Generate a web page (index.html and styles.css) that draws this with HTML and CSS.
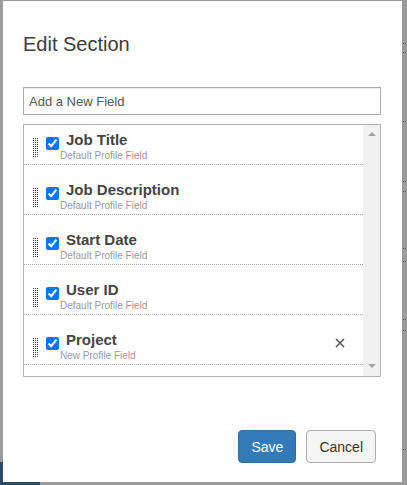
FILE: index.html
```html
<!DOCTYPE html>
<html>
<head>
<meta charset="utf-8">
<link rel="stylesheet" href="styles.css">
</head>
<body>
<div class="backdrop">
  <div class="bg-block"></div>
  <div class="bg-dots d1"></div>
  <div class="bg-dots d2"></div>
  <div class="bg-dots d3"></div>
  <div class="bg-dots d4"></div>
  <div class="bg-dots d5"></div>
  <div class="bg-dots d6"></div>
  <div class="bg-dots d7"></div>
  <div class="bg-dots d8"></div>
  <div class="bg-dots d9"></div>
  <div class="bg-dots d10"></div>
</div>
<div class="modal">
  <h4 class="modal-title">Edit Section</h4>
  <input class="field-input" type="text" placeholder="Add a New Field">
  <div class="field-list">
    <div class="rows">
      <div class="row row-first">
        <span class="handle"></span>
        <div class="content">
          <div class="line1"><input type="checkbox" class="cb" checked><span class="name">Job Title</span></div>
          <div class="sub">Default Profile Field</div>
        </div>
      </div>
      <div class="row">
        <span class="handle"></span>
        <div class="content">
          <div class="line1"><input type="checkbox" class="cb" checked><span class="name">Job Description</span></div>
          <div class="sub">Default Profile Field</div>
        </div>
      </div>
      <div class="row">
        <span class="handle"></span>
        <div class="content">
          <div class="line1"><input type="checkbox" class="cb" checked><span class="name">Start Date</span></div>
          <div class="sub">Default Profile Field</div>
        </div>
      </div>
      <div class="row">
        <span class="handle"></span>
        <div class="content">
          <div class="line1"><input type="checkbox" class="cb" checked><span class="name">User ID</span></div>
          <div class="sub">Default Profile Field</div>
        </div>
      </div>
      <div class="row">
        <span class="handle"></span>
        <div class="content">
          <div class="line1"><input type="checkbox" class="cb" checked><span class="name">Project</span></div>
          <div class="sub">New Profile Field</div>
        </div>
        <span class="remove"><svg width="10" height="10" viewBox="0 0 10 10"><path d="M1 1 L9 9 M9 1 L1 9" stroke="#555" stroke-width="1.5" fill="none"/></svg></span>
      </div>
    </div>
    <div class="scrollbar">
      <span class="arrow-up"></span>
      <span class="arrow-down"></span>
    </div>
  </div>
  <div class="footer">
    <button class="btn btn-primary">Save</button>
    <button class="btn btn-default">Cancel</button>
  </div>
</div>
</body>
</html>
```
FILE: styles.css
```css
html, body {
  margin: 0;
  padding: 0;
}
body {
  width: 407px;
  height: 485px;
  overflow: hidden;
  background: #9b9b9b;
  font-family: "Liberation Sans", Arial, sans-serif;
  position: relative;
}
.backdrop {
  position: absolute;
  left: 0;
  top: 0;
  width: 407px;
  height: 485px;
}
.bg-block {
  position: absolute;
  left: 0;
  top: 462px;
  width: 40px;
  height: 23px;
  background: #2c4a6b;
}
.bg-dots {
  position: absolute;
  left: 403px;
  width: 4px;
  height: 1px;
  background-image: linear-gradient(to right, #555 50%, transparent 50%);
  background-size: 2px 1px;
}
.d1 { top: 43px; }
.d2 { top: 52px; }
.d3 { top: 121px; }
.d4 { top: 181px; }
.d5 { top: 191px; }
.d6 { top: 248px; }
.d7 { top: 261px; }
.d8 { top: 319px; }
.d9 { top: 330px; }
.d10 { top: 449px; }

.modal {
  position: relative;
  margin: 1px 0 0 3px;
  width: 399px;
  height: 481px;
  box-sizing: border-box;
  background: #fff;
  padding: 31px 21px 0 20px;
}
.modal-title {
  margin: 0;
  font-size: 20px;
  line-height: 24px;
  font-weight: normal;
  color: #3c3c3c;
}
.field-input {
  display: block;
  margin: 31px 0 0 0;
  width: 358px;
  height: 28px;
  box-sizing: border-box;
  border: 1px solid #aaa;
  box-shadow: inset 0 1px 1px rgba(0,0,0,0.075);
  padding: 0 5px;
  font-family: "Liberation Sans", Arial, sans-serif;
  font-size: 13px;
  color: #555;
  outline: none;
}
.field-input::placeholder {
  color: #555;
}
.field-list {
  margin-top: 9px;
  width: 358px;
  height: 253px;
  box-sizing: border-box;
  border: 1px solid #b3b3b3;
  display: flex;
  overflow: hidden;
}
.rows {
  flex: 1;
  display: flex;
  flex-direction: column;
}
.row {
  height: 50px;
  box-sizing: border-box;
  padding-top: 16px;
  border-bottom: 1px dotted #a6a6a6;
  display: flex;
  align-items: flex-start;
  flex-shrink: 0;
}
.row-first {
  height: 40px;
  padding-top: 6px;
}
.handle {
  width: 5px;
  height: 20px;
  margin: 7px 0 0 9px;
  background-image:
    linear-gradient(to right, transparent 50%, #fff 50%),
    linear-gradient(#333 50%, transparent 50%);
  background-size: 2px 2px;
  flex-shrink: 0;
}
.content {
  margin-left: 8px;
  display: flex;
  flex-direction: column;
}
.line1 {
  height: 19px;
  display: flex;
  align-items: flex-start;
}
.cb {
  width: 13px;
  height: 13px;
  margin: 6px 0 0 0;
  flex-shrink: 0;
}
.name {
  margin-left: 7px;
  font-size: 15px;
  line-height: 18px;
  font-weight: bold;
  color: #444;
  white-space: nowrap;
}
.sub {
  padding-left: 14px;
  font-size: 10px;
  line-height: 12px;
  color: #9a9a9a;
  white-space: nowrap;
}
.remove {
  margin: 7px 18px 0 auto;
  width: 10px;
  height: 10px;
  display: flex;
}
.scrollbar {
  width: 17px;
  flex-shrink: 0;
  background: #f1f1f1;
  display: flex;
  flex-direction: column;
  align-items: center;
  justify-content: space-between;
  padding: 7px 0 8px;
  box-sizing: border-box;
}
.arrow-up {
  width: 0;
  height: 0;
  border-left: 4px solid transparent;
  border-right: 4px solid transparent;
  border-bottom: 4px solid #a3a3a3;
}
.arrow-down {
  width: 0;
  height: 0;
  border-left: 4px solid transparent;
  border-right: 4px solid transparent;
  border-top: 4px solid #a3a3a3;
}
.footer {
  margin-top: 53px;
  padding-right: 5px;
  display: flex;
  justify-content: flex-end;
  gap: 10px;
}
.btn {
  height: 33px;
  box-sizing: border-box;
  padding: 0 12px;
  border-radius: 4px;
  font-family: "Liberation Sans", Arial, sans-serif;
  font-size: 14px;
  line-height: 20px;
  cursor: pointer;
}
.btn-primary {
  background: #337ab7;
  border: 1px solid #2e6da4;
  color: #fff;
}
.btn-default {
  background: #f5f5f5;
  border: 1px solid #adadad;
  color: #333;
}
```
